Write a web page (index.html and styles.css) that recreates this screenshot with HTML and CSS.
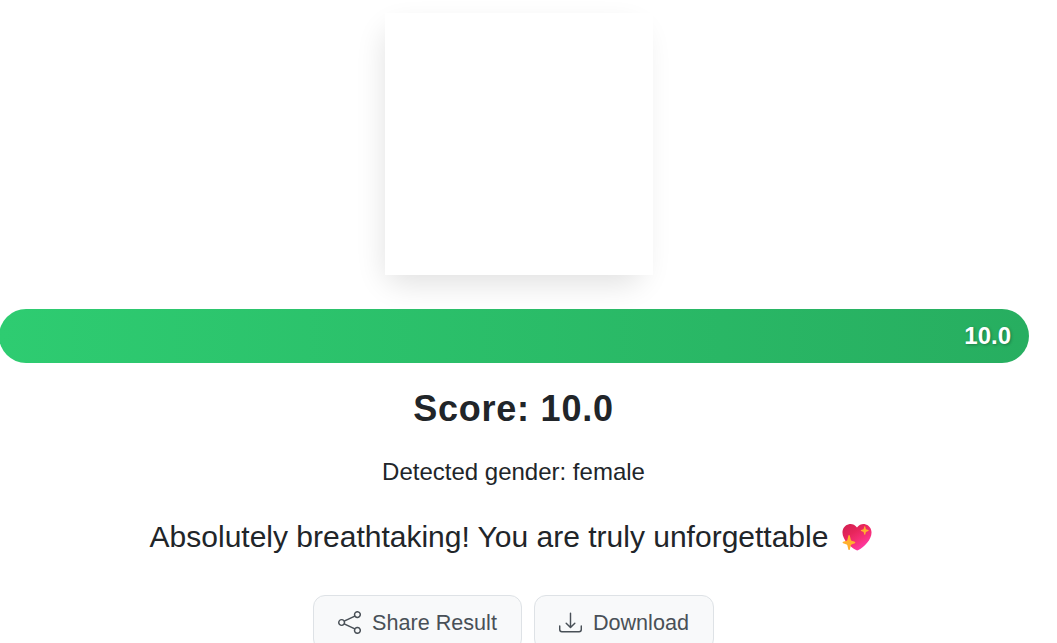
FILE: index.html
```
<!DOCTYPE html>
<html lang="en">
<head>
    <meta charset="UTF-8">
    <title>Score Result</title>
    <link rel="stylesheet" href="styles.css">
</head>
<body>
    <div class="result">
        <div class="photo">
            <div class="photo-cover"></div>
        </div>

        <div class="score-bar">
            <span class="score-value">10.0</span>
        </div>

        <h2 class="score">Score: 10.0</h2>
        <p class="gender">Detected gender: female</p>
        <p class="message">
            <span>Absolutely breathtaking! You are truly unforgettable</span>
            <svg class="heart" viewBox="0 0 32 32">
                <defs>
                    <linearGradient id="heartFill" x1="0" y1="0" x2="0.7" y2="1">
                        <stop offset="0" stop-color="#cf1f50"/>
                        <stop offset="0.4" stop-color="#e8265c"/>
                        <stop offset="0.7" stop-color="#f8307c"/>
                        <stop offset="1" stop-color="#ff3bb0"/>
                    </linearGradient>
                </defs>
                <path fill="url(#heartFill)" d="M16 5.8C13.8 2.4 10.4 1.7 7.6 2.2 3.5 3 1 6.6 1 10.8c0 7.6 8 14.6 14 18.2.8.5 1.7.5 2.5 0C23.5 25.4 31 18.4 31 10.8c0-4.2-2.6-7.8-6.6-8.6-2.9-.5-6.3.3-8.4 3.600z"/>
                <path fill="#ffb02e" d="M7.8 13.500c.4 0 .7.3.8.7l1.100 4.300c.1.400.4.700.8.800l3.200 1.200c.7.300.7 1.200 0 1.500l-3.200 1.200c-.4.100-.7.400-.8.800l-1.100 4.300c-.2.800-1.300.8-1.500 0L6 24c-.1-.4-.4-.7-.8-.8L1.700 22c-.7-.3-.7-1.200 0-1.500l3.500-1.200c.4-.1.700-.4.800-.8l1.100-4.300c.1-.4.300-.7.700-.7z"/>
                <path fill="#ffb02e" d="M24 4.500c.3 0 .4.200.5.400l.7 2.600 2.500.8c.5.200.5.900 0 1.100l-2.500.8-.7 2.600c-.1.500-.9.500-1 0l-.7-2.600-2.500-.8c-.5-.2-.5-.9 0-1.100l2.500-.8.7-2.600c.1-.2.200-.4.500-.4z"/>
            </svg>
        </p>

        <div class="actions">
            <button class="btn">
                <svg class="icon" viewBox="0 0 16 16" fill="currentColor">
                    <path d="M13.500 1a1.500 1.500 0 1 0 0 3 1.500 1.500 0 0 0 0-3M11 2.500a2.500 2.500 0 1 1 .603 1.628l-6.718 3.120a2.500 2.500 0 0 1 0 1.504l6.718 3.120a2.500 2.500 0 1 1-.488.876l-6.718-3.120a2.500 2.500 0 1 1 0-3.256l6.718-3.120A2.500 2.500 0 0 1 11 2.500m-8.500 4a1.500 1.500 0 1 0 0 3 1.500 1.500 0 0 0 0-3m11 5.500a1.500 1.500 0 1 0 0 3 1.500 1.500 0 0 0 0-3"/>
                </svg>
                <span>Share Result</span>
            </button>
            <button class="btn">
                <svg class="icon" viewBox="0 0 16 16" fill="currentColor">
                    <path d="M.5 9.900a.5.5 0 0 1 .5.5v2.500a1 1 0 0 0 1 1h12a1 1 0 0 0 1-1v-2.500a.5.5 0 0 1 1 0v2.500a2 2 0 0 1-2 2H2a2 2 0 0 1-2-2v-2.500a.5.5 0 0 1 .5-.5"/>
                    <path d="M7.646 11.854a.5.5 0 0 0 .708 0l3-3a.5.5 0 0 0-.708-.708L8.500 10.293V1.500a.5.5 0 0 0-1 0v8.793L5.354 8.146a.5.5 0 1 0-.708.708z"/>
                </svg>
                <span>Download</span>
            </button>
        </div>
    </div>
</body>
</html>
```
FILE: styles.css
```
body {
    margin: 0;
    font-family: Arial, "Liberation Sans", sans-serif;
    color: #212529;
    background: #fff;
    overflow: hidden;
}
.result {
    display: flex;
    flex-direction: column;
    align-items: center;
    width: 1030px;
    margin-left: -1.5px;
    padding-top: 13px;
}
.photo {
    width: 257px;
    height: 256px;
    margin-bottom: 40px;
    border-radius: 16px;
    box-shadow: 0 15px 30px rgba(0, 0, 0, 0.12);
}
.photo-cover {
    width: 268px;
    height: 262px;
    background: #fff;
}
.score-bar {
    display: flex;
    align-items: center;
    justify-content: flex-end;
    box-sizing: border-box;
    width: 100%;
    height: 54px;
    padding-right: 17.5px;
    border-radius: 27px;
    background: linear-gradient(90deg, #2ecc71, #27ae60);
}
.score-value {
    color: #fff;
    font-size: 24px;
    font-weight: bold;
    text-shadow: 1px 1px 3px rgba(0, 0, 0, 0.3);
}
.score {
    margin: 24px 0 0;
    font-size: 36px;
    line-height: 43px;
    letter-spacing: 0.75px;
}
.gender {
    margin: 24px 0 0;
    font-size: 24px;
    line-height: 36px;
}
.message {
    display: flex;
    align-items: center;
    gap: 13px;
    margin: 24px 0 0;
    padding-right: 4px;
    font-size: 30px;
    line-height: 45px;
}
.heart {
    width: 32px;
    height: 31px;
    margin-top: 2px;
}
.actions {
    display: flex;
    gap: 12px;
    margin-top: 36px;
}
.btn {
    display: flex;
    align-items: center;
    gap: 11px;
    height: 56px;
    padding: 0 24px;
    border: 1px solid #dee2e6;
    border-radius: 12px;
    background: #f8f9fa;
    color: #495057;
    font-family: inherit;
    font-size: 21.6px;
}
.icon {
    width: 23px;
    height: 23px;
    margin-bottom: 2px;
}
```
